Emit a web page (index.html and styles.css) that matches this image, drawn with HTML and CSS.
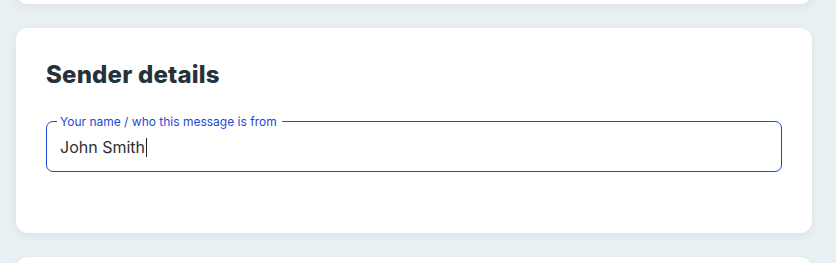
FILE: index.html
```html
<!DOCTYPE html>
<html lang="en">
<head>
<meta charset="utf-8">
<title>Sender details</title>
<link rel="stylesheet" href="styles.css">
</head>
<body>
<main class="page">
  <section class="card card-prev"></section>
  <section class="card">
    <h2 class="card-title">Sender details</h2>
    <fieldset class="field">
      <legend class="field-label">Your name / who this message is from</legend>
      <div class="field-value"><span>John Smith</span><span class="caret"></span></div>
    </fieldset>
  </section>
  <section class="card card-next"></section>
</main>
</body>
</html>
```
FILE: styles.css
```css
html, body {
  margin: 0;
  padding: 0;
  background: #e9f0f3;
}
body {
  font-family: Inter, "Noto Sans", sans-serif;
  overflow: hidden;
  height: 263px;
}
.page {
  display: flex;
  flex-direction: column;
  gap: 24px;
  padding: 0 24px 0 16px;
}
.card {
  background: #ffffff;
  border-radius: 12px;
  box-shadow: 0 3px 8px rgba(40, 60, 80, 0.07);
  padding: 31px 30px 0 30px;
  height: 205px;
  box-sizing: border-box;
  flex: none;
}
.card-prev {
  margin-top: -96px;
  height: 100px;
}
.card-next {
  height: 100px;
}
.card-title {
  margin: 0 0 23px 0;
  font-family: Inter, sans-serif;
  font-weight: 800;
  font-size: 24px;
  line-height: 32px;
  color: #263238;
  letter-spacing: 0.2px;
}
.field {
  margin: 0;
  border: 1px solid #1f48d4;
  border-radius: 7px;
  padding: 0 10px 0 10px;
  height: 58px;
  box-sizing: border-box;
}
.field-label {
  padding: 0 5px 0 3px;
  font-size: 12px;
  line-height: 15px;
  color: #1f48d4;
}
.field-value {
  padding: 8px 3px 0 3px;
  font-size: 16px;
  line-height: 20px;
  color: #2b2f33;
  display: flex;
  align-items: center;
}
.caret {
  display: inline-block;
  width: 1px;
  height: 19px;
  background: #222;
  margin-left: 1px;
}
```
